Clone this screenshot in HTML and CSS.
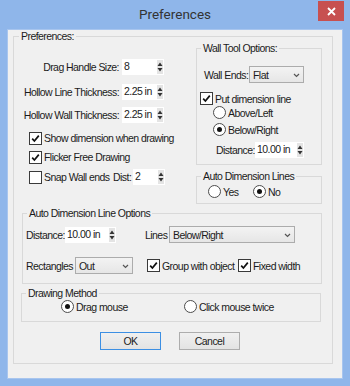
FILE: index.html
```html
<!DOCTYPE html>
<html lang="en">
<head>
    <meta charset="UTF-8">
    <meta name="viewport" content="width=device-width, initial-scale=1.0">
    <title>Preferences</title>
    <link rel="stylesheet" href="styles.css">
</head>
<body>

    <div class="window">
        <div class="titlebar">
            <span></span>
            <span class="title">Preferences</span>
            <span class="close">
                <svg width="9" height="9" viewBox="0 0 9 9"><path d="M1 1 L8 8 M8 1 L1 8" stroke="#fff" stroke-width="1.8"/></svg>
            </span>
        </div>

        <div class="client">
            <fieldset class="group outer">
                <legend>Preferences:</legend>

                <div class="top">
                    <div class="left">
                        <div class="field f1">
                            <span class="lbl">Drag Handle Size:</span>
                            <span class="spin w42">8<svg class="arrows" width="6" height="14" viewBox="0 0 6 14"><rect width="6" height="14" fill="#e4e4e4"/><path d="M0.5 6 L3 2.5 L5.5 6Z M0.5 8 L3 11.5 L5.5 8Z" fill="#333"/></svg></span>
                        </div>
                        <div class="field f2">
                            <span class="lbl">Hollow Line Thickness:</span>
                            <span class="spin w42">2.25 in<svg class="arrows" width="6" height="14" viewBox="0 0 6 14"><rect width="6" height="14" fill="#e4e4e4"/><path d="M0.5 6 L3 2.5 L5.5 6Z M0.5 8 L3 11.5 L5.5 8Z" fill="#333"/></svg></span>
                        </div>
                        <div class="field f3">
                            <span class="lbl">Hollow Wall Thickness:</span>
                            <span class="spin w42">2.25 in<svg class="arrows" width="6" height="14" viewBox="0 0 6 14"><rect width="6" height="14" fill="#e4e4e4"/><path d="M0.5 6 L3 2.5 L5.5 6Z M0.5 8 L3 11.5 L5.5 8Z" fill="#333"/></svg></span>
                        </div>
                        <div class="opt o1">
                            <span class="check"><svg width="9" height="9" viewBox="0 0 9 9"><path d="M1.2 4.6 L3.4 7 L7.8 1.6" stroke="#111" stroke-width="1.7" fill="none"/></svg></span>
                            Show dimension when drawing
                        </div>
                        <div class="opt o2">
                            <span class="check"><svg width="9" height="9" viewBox="0 0 9 9"><path d="M1.2 4.6 L3.4 7 L7.8 1.6" stroke="#111" stroke-width="1.7" fill="none"/></svg></span>
                            Flicker Free Drawing
                        </div>
                        <div class="opt o3">
                            <span class="check"></span>
                            <span class="snap">Snap Wall ends</span>
                            <span class="dist">Dist:</span>
                            <span class="spin w32">2<svg class="arrows" width="6" height="14" viewBox="0 0 6 14"><rect width="6" height="14" fill="#e4e4e4"/><path d="M0.5 6 L3 2.5 L5.5 6Z M0.5 8 L3 11.5 L5.5 8Z" fill="#333"/></svg></span>
                        </div>
                    </div>

                    <div class="right">
                        <fieldset class="group wall">
                            <legend>Wall Tool Options:</legend>
                            <div class="row ends">
                                <span class="ends-lbl">Wall Ends:</span>
                                <span class="combo w55">Flat<svg width="7" height="5" viewBox="0 0 7 5"><path d="M1 1 L3.5 3.5 L6 1" stroke="#555" stroke-width="1.2" fill="none"/></svg></span>
                            </div>
                            <div class="opt put">
                                <span class="check"><svg width="9" height="9" viewBox="0 0 9 9"><path d="M1.2 4.6 L3.4 7 L7.8 1.6" stroke="#111" stroke-width="1.7" fill="none"/></svg></span>
                                Put dimension line
                            </div>
                            <div class="opt r1"><span class="radio"></span>Above/Left</div>
                            <div class="opt r2"><span class="radio on"></span>Below/Right</div>
                            <div class="row wdist">
                                <span class="wdist-lbl">Distance:</span>
                                <span class="spin w49">10.00 in<svg class="arrows" width="6" height="14" viewBox="0 0 6 14"><rect width="6" height="14" fill="#e4e4e4"/><path d="M0.5 6 L3 2.5 L5.5 6Z M0.5 8 L3 11.5 L5.5 8Z" fill="#333"/></svg></span>
                            </div>
                        </fieldset>

                        <fieldset class="group autolines">
                            <legend>Auto Dimension Lines</legend>
                            <div class="opt yn">
                                <span class="radio"></span><span class="yes">Yes</span>
                                <span class="radio on"></span>No
                            </div>
                        </fieldset>
                    </div>
                </div>

                <fieldset class="group autoopts">
                    <legend>Auto Dimension Line Options</legend>
                    <div class="row a1">
                        <span class="dist-lbl">Distance:</span>
                        <span class="spin w51">10.00 in<svg class="arrows" width="6" height="14" viewBox="0 0 6 14"><rect width="6" height="14" fill="#e4e4e4"/><path d="M0.5 6 L3 2.5 L5.5 6Z M0.5 8 L3 11.5 L5.5 8Z" fill="#333"/></svg></span>
                        <span class="lines-lbl">Lines</span>
                        <span class="combo w126">Below/Right<svg width="7" height="5" viewBox="0 0 7 5"><path d="M1 1 L3.5 3.5 L6 1" stroke="#555" stroke-width="1.2" fill="none"/></svg></span>
                    </div>
                    <div class="row a2">
                        <span class="rect-lbl">Rectangles</span>
                        <span class="combo w58">Out<svg width="7" height="5" viewBox="0 0 7 5"><path d="M1 1 L3.5 3.5 L6 1" stroke="#555" stroke-width="1.2" fill="none"/></svg></span>
                        <span class="check group-chk"><svg width="9" height="9" viewBox="0 0 9 9"><path d="M1.2 4.6 L3.4 7 L7.8 1.6" stroke="#111" stroke-width="1.7" fill="none"/></svg></span>
                        <span class="group-lbl">Group with object</span>
                        <span class="check"><svg width="9" height="9" viewBox="0 0 9 9"><path d="M1.2 4.6 L3.4 7 L7.8 1.6" stroke="#111" stroke-width="1.7" fill="none"/></svg></span>
                        Fixed width
                    </div>
                </fieldset>

                <fieldset class="group drawing">
                    <legend>Drawing Method</legend>
                    <div class="opt dm">
                        <span class="radio on"></span><span class="drag">Drag mouse</span>
                        <span class="radio"></span>Click mouse twice
                    </div>
                </fieldset>

                <div class="buttons">
                    <span class="btn default">OK</span>
                    <span class="btn">Cancel</span>
                </div>
            </fieldset>
        </div>
    </div>

</body>
</html>
```

FILE: styles.css
```css
* {
    box-sizing: border-box;
}

body {
    margin: 0;
    background-color: #8fb6ea;
    font-family: "Liberation Sans", Arial, sans-serif;
    font-size: 10.5px;
    letter-spacing: -0.55px;
    color: #1b1b1b;
}

.window {
    width: 350px;
    height: 386px;
    background-color: #8fb6ea;
    display: flex;
    flex-direction: column;
}

/* title bar */
.titlebar {
    height: 29px;
    display: grid;
    grid-template-columns: 1fr auto 1fr;
    align-items: center;
}

.title {
    font-family: Roboto, "Liberation Sans", sans-serif;
    font-size: 13.5px;
    letter-spacing: 0;
    color: #333;
    padding-bottom: 2px;
}

.close {
    justify-self: end;
    align-self: start;
    width: 26px;
    height: 20px;
    margin: 1px 6px 0 0;
    background-color: #c75050;
    display: flex;
    align-items: center;
    justify-content: center;
}

.client {
    flex: 1;
    margin: 0 7px 7px 7px;
    background-color: #f0f0f0;
    border: 1px solid #a8c5ee;
}

/* group boxes */
.group {
    margin: 0;
    min-width: 0;
    border: 1px solid #d9d9d9;
}

.group legend {
    padding: 0 2px;
    margin-left: 1px;
    line-height: 12px;
}

.outer {
    margin: 0 9px 0 5px;
    padding: 0 10px 13px 8px;
}

.outer > legend {
    margin-left: -3px;
}

.top {
    display: grid;
    grid-template-columns: 174px 126px;
    align-items: start;
}

.row, .opt {
    display: flex;
    align-items: center;
    white-space: nowrap;
}

/* left column */
.field {
    display: grid;
    grid-template-columns: 97px 42px;
    column-gap: 3px;
    height: 16px;
    white-space: nowrap;
}

.lbl {
    text-align: right;
    line-height: 16px;
}

.f1 { margin-top: 17px; }
.f2 { margin-top: 9px; }
.f3 { margin-top: 7px; }

.left .opt {
    height: 16px;
    padding-left: 7px;
}

.o1 { margin-top: 7px; }
.o2 { margin-top: 3px; }
.o3 { margin-top: 4px; }

.snap { width: 69px; }
.dist { width: 20px; }

/* controls */
.spin {
    display: flex;
    justify-content: space-between;
    align-items: flex-start;
    height: 16px;
    background-color: #fff;
    padding: 1px 1px 0 2px;
    line-height: 13px;
}

.arrows {
    flex-shrink: 0;
}

.w32 { width: 32px; }
.w42 { width: 42px; }
.w49 { width: 49px; }
.w51 { width: 51px; }
.w55 { width: 55px; }
.w58 { width: 58px; }
.w126 { width: 126px; }

.combo {
    display: flex;
    justify-content: space-between;
    align-items: center;
    height: 17px;
    padding: 0 3px 0 3px;
    border: 1px solid #acacac;
    background: linear-gradient(#f3f3f3, #e6e6e6);
}

.combo svg {
    margin-top: 2px;
}

.check {
    width: 13px;
    height: 13px;
    flex-shrink: 0;
    margin-right: 2px;
    border: 1px solid #3a3a3a;
    background-color: #fff;
    display: flex;
    align-items: center;
    justify-content: center;
}

.radio {
    width: 13px;
    height: 13px;
    flex-shrink: 0;
    margin-right: 2px;
    border: 1px solid #4c4c4c;
    border-radius: 50%;
    background-color: #fff;
    display: flex;
    align-items: center;
    justify-content: center;
}

.radio.on::after {
    content: "";
    width: 5px;
    height: 5px;
    border-radius: 50%;
    background-color: #111;
}

/* wall tool options */
.wall {
    padding: 0 0 6px 3px;
}

.ends {
    height: 17px;
    margin-top: 12px;
    padding-left: 4px;
}

.ends-lbl { width: 45px; }

.put {
    height: 13px;
    margin-top: 9px;
}

.r1, .r2 {
    height: 13px;
    padding-left: 13px;
}

.r1 { margin-top: 1px; }
.r2 { margin-top: 4px; }

.wdist {
    height: 16px;
    margin-top: 6px;
    padding-left: 16px;
}

.wdist-lbl { width: 39px; }

.autolines {
    margin-top: 5px;
    padding: 0 0 5px 3px;
}

.yn {
    height: 13px;
    margin-top: 3px;
    padding-left: 8px;
}

.yes { width: 30px; }

/* auto dimension line options */
.autoopts {
    margin-top: 3px;
    padding: 0 0 9px 3px;
}

.a1 {
    height: 17px;
    margin-top: 7px;
}

.dist-lbl { width: 39px; }

.lines-lbl {
    width: 24px;
    margin-left: 29px;
}

.a2 {
    height: 17px;
    margin-top: 14px;
}

.rect-lbl { width: 49px; }

.group-chk { margin-left: 14px; }

.group-lbl { width: 76px; }

/* drawing method */
.drawing {
    margin: 3px 1px 0 -1px;
    padding: 0 0 8px 3px;
}

.dm {
    height: 13px;
    margin-top: 1px;
    padding-left: 36px;
}

.drag { width: 108px; }

/* buttons */
.buttons {
    display: flex;
    gap: 18px;
    margin-top: 10px;
    padding-left: 78px;
}

.btn {
    width: 61px;
    height: 18px;
    display: flex;
    align-items: center;
    justify-content: center;
    border: 1px solid #adadad;
    background: linear-gradient(#f0f0f0, #e3e3e3);
}

.btn.default {
    border-color: #3c8fe3;
}
```
